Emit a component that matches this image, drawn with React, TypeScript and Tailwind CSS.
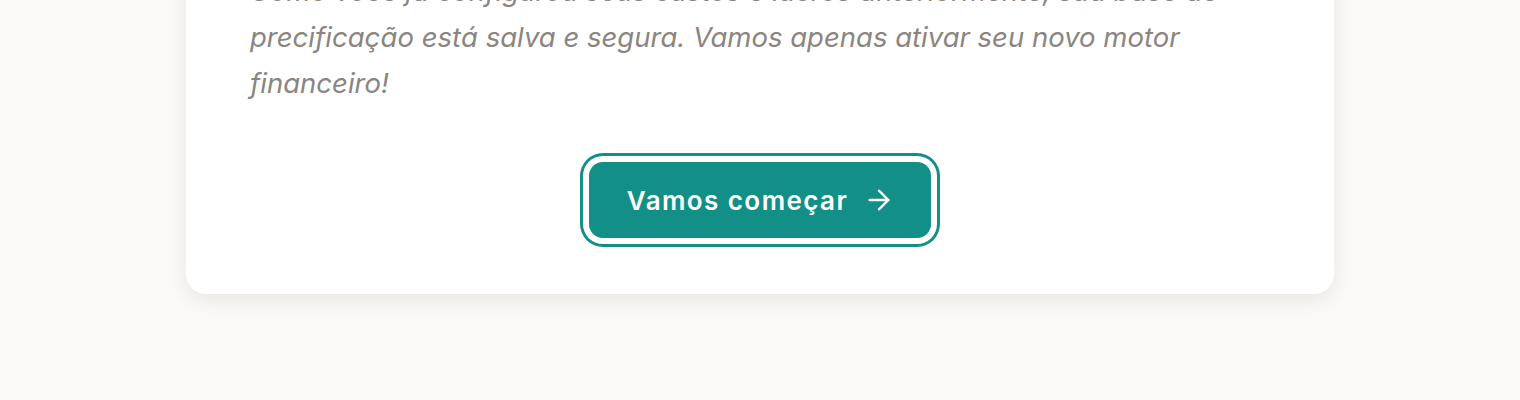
import { ArrowRight } from "lucide-react";

export default function App() {
  return (
    <div className="min-h-[400px] w-full bg-[#faf9f7] overflow-hidden" style={{ fontFamily: "Inter, 'Liberation Sans', sans-serif" }}>
      <div className="mx-auto w-[1148px] -mt-[32px] rounded-b-[20px] bg-white shadow-[0_6px_18px_rgba(60,50,40,0.09)] px-[64px] pb-[56px]">
        <p className="text-[27.5px] italic leading-[46px] text-[#8a857f]">
          Como você já configurou seus custos e lucros anteriormente, sua base de precificação está salva e segura. Vamos apenas ativar seu novo motor financeiro!
        </p>

        <div className="mt-[56px] flex justify-center">
          <button className="flex h-[76px] items-center gap-[15px] rounded-[14px] bg-[#128f87] pl-[38px] pr-[36px] text-[26px] font-semibold tracking-[0.055em] text-white ring-[3px] ring-[#128f87] ring-offset-[6px] ring-offset-white">
            Vamos começar
            <ArrowRight size={32} strokeWidth={1.8} />
          </button>
        </div>
      </div>
    </div>
  );
}
